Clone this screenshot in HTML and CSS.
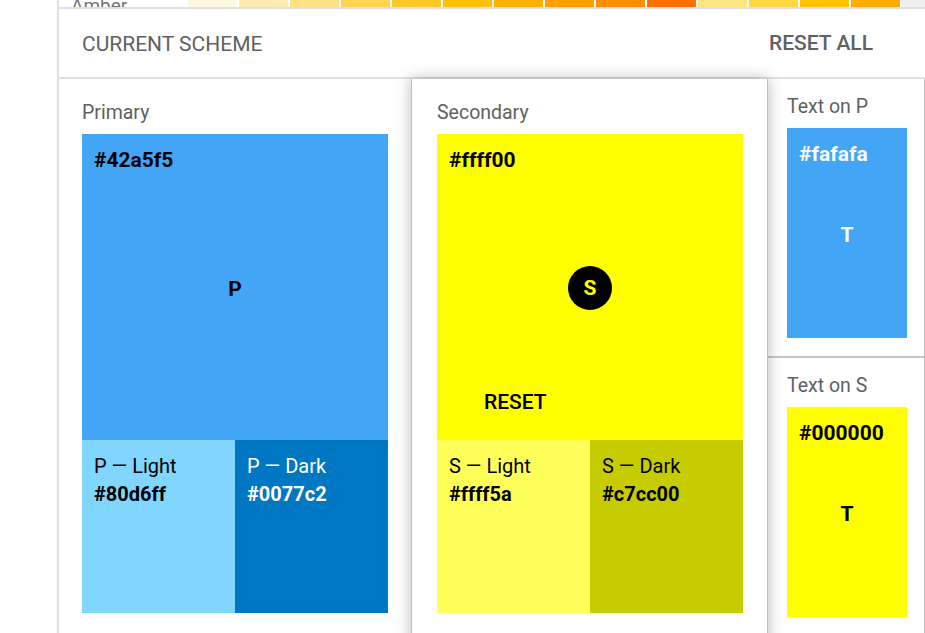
FILE: index.html
```html
<!DOCTYPE html>
<html>
<head>
<meta charset="utf-8">
<link rel="stylesheet" href="styles.css">
</head>
<body>
<div class="sheet">
  <div class="strip">
    <div class="strip-name">Amber</div>
    <div class="chip c50"></div>
    <div class="chip c100"></div>
    <div class="chip c200"></div>
    <div class="chip c300"></div>
    <div class="chip c400"></div>
    <div class="chip c500"></div>
    <div class="chip c600"></div>
    <div class="chip c700"></div>
    <div class="chip c800"></div>
    <div class="chip c900"></div>
    <div class="chip ca100"></div>
    <div class="chip ca200"></div>
    <div class="chip ca400"></div>
    <div class="chip ca700"></div>
    <div class="chip-rest"></div>
  </div>
  <div class="scheme">
    <div class="scheme-header">
      <span class="scheme-title">CURRENT SCHEME</span>
      <span class="reset-all">RESET ALL</span>
    </div>
    <div class="columns">
      <section class="col col-primary">
        <div class="label">Primary</div>
        <div class="main-swatch primary">
          <span class="hex">#42a5f5</span>
          <span class="letter">P</span>
        </div>
        <div class="variants">
          <div class="variant p-light">
            <div class="v-name">P — Light</div>
            <div class="v-hex">#80d6ff</div>
          </div>
          <div class="variant p-dark">
            <div class="v-name">P — Dark</div>
            <div class="v-hex">#0077c2</div>
          </div>
        </div>
      </section>
      <section class="col col-secondary">
        <div class="label">Secondary</div>
        <div class="main-swatch secondary">
          <span class="hex">#ffff00</span>
          <span class="badge">S</span>
          <span class="reset">RESET</span>
        </div>
        <div class="variants">
          <div class="variant s-light">
            <div class="v-name">S — Light</div>
            <div class="v-hex">#ffff5a</div>
          </div>
          <div class="variant s-dark">
            <div class="v-name">S — Dark</div>
            <div class="v-hex">#c7cc00</div>
          </div>
        </div>
      </section>
      <section class="col col-text">
        <div class="text-block first">
          <div class="label">Text on P</div>
          <div class="text-swatch on-p">
            <span class="hex">#fafafa</span>
            <span class="letter">T</span>
          </div>
        </div>
        <div class="text-block">
          <div class="label">Text on S</div>
          <div class="text-swatch on-s">
            <span class="hex">#000000</span>
            <span class="letter">T</span>
          </div>
        </div>
      </section>
    </div>
  </div>
</div>
</body>
</html>
```

FILE: styles.css
```css
html, body {
  margin: 0;
  padding: 0;
  background: #ffffff;
  overflow: hidden;
}
body {
  font-family: Roboto, "Noto Sans", Arial, sans-serif;
  color: rgba(0, 0, 0, 0.87);
  width: 925px;
  height: 633px;
}
.sheet {
  margin-left: 57px;
  border-left: 2px solid #e0e0e0;
  height: 633px;
}
.strip {
  display: flex;
  height: 7px;
  overflow: hidden;
}
.strip-name {
  width: 115px;
  padding-left: 12px;
  margin-right: 2px;
  font-size: 19px;
  line-height: 22px;
  margin-top: -5px;
  color: #757575;
  flex: none;
}
.chip {
  width: 49px;
  margin-right: 2px;
  flex: none;
}
.chip-rest {
  flex: 1;
  margin-left: -1px;
  background: #eeeeee;
}
.c50 { background: #fff8e1; }
.c100 { background: #ffecb3; }
.c200 { background: #ffe082; }
.c300 { background: #ffd54f; }
.c400 { background: #ffca28; }
.c500 { background: #ffc107; }
.c600 { background: #ffb300; }
.c700 { background: #ffa000; }
.c800 { background: #ff8f00; }
.c900 { background: #ff6f00; }
.ca100 { background: #ffe57f; }
.ca200 { background: #ffd740; }
.ca400 { background: #ffc400; }
.ca700 { background: #ffab00; }

.scheme {
  border-top: 2px solid #e0e0e0;
}
.scheme-header {
  height: 68px;
  display: flex;
  align-items: center;
  justify-content: space-between;
  padding: 0 52px 0 23px;
  border-bottom: 2px solid #e0e0e0;
  font-size: 21px;
  color: #616161;
}
.scheme-title {
  font-weight: 400;
  padding-top: 2px;
}
.reset-all {
  font-weight: 500;
}
.columns {
  display: flex;
  align-items: flex-start;
}
.col {
  box-sizing: border-box;
  flex: none;
}
.label {
  font-size: 19.5px;
  line-height: 22px;
  color: #616161;
  margin-bottom: 10px;
}
.col-primary {
  width: 352px;
  padding: 23px 23px 0 23px;
}
.col-secondary {
  width: 357px;
  padding: 23px 24px 40px 25px;
  border-left: 1px solid #bdbdbd;
  border-right: 1px solid #bdbdbd;
  background: #ffffff;
  position: relative;
  z-index: 1;
  box-shadow: 0 0 14px rgba(0, 0, 0, 0.28);
  min-height: 560px;
}
.col-text {
  width: 157px;
  border-right: 1px solid #bdbdbd;
  min-height: 560px;
}
.main-swatch {
  position: relative;
  width: 306px;
  height: 306px;
  display: flex;
  align-items: center;
  justify-content: center;
}
.primary { background: #42a5f5; color: #000; }
.secondary { background: #ffff00; color: #000; }
.hex {
  position: absolute;
  left: 12px;
  top: 12px;
  font-size: 21px;
  line-height: 28px;
  font-weight: 700;
}
.letter {
  font-size: 21px;
  font-weight: 700;
  line-height: 28px;
  padding-top: 4px;
}
.badge {
  width: 44px;
  height: 44px;
  margin-top: 2px;
  border-radius: 50%;
  background: #000;
  color: #ffff00;
  font-size: 21px;
  font-weight: 700;
  display: flex;
  align-items: center;
  justify-content: center;
}
.reset {
  position: absolute;
  left: 47px;
  bottom: 24px;
  font-size: 21px;
  line-height: 28px;
  font-weight: 500;
  color: #000;
}
.variants {
  display: flex;
  width: 306px;
  height: 173px;
}
.variant {
  flex: 1;
  box-sizing: border-box;
  padding: 12px 12px 0 12px;
  font-size: 20px;
  line-height: 28px;
}
.v-hex {
  font-weight: 700;
  font-size: 20px;
}
.p-light { background: #80d6ff; color: #000; }
.p-dark { background: #0077c2; color: #fff; }
.s-light { background: #ffff5a; color: #000; }
.s-dark { background: #c7cc00; color: #000; }

.text-block {
  padding: 17px 17px 18px 19px;
}
.text-block.first {
  border-bottom: 2px solid #c6c6c6;
}
.text-swatch {
  position: relative;
  width: 120px;
  height: 210px;
  display: flex;
  align-items: center;
  justify-content: center;
}
.on-p { background: #42a5f5; color: #fafafa; }
.on-s { background: #ffff00; color: #000000; }
```
